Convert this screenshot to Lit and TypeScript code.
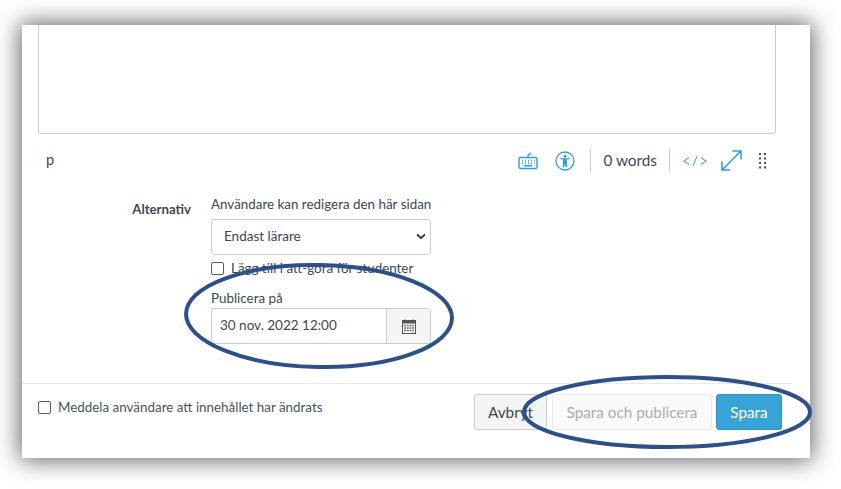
import { LitElement, html, css } from "lit";
import { customElement } from "lit/decorators.js";

@customElement("app-root")
export class AppRoot extends LitElement {
  static styles = css`
    :host { display: block; width: 841px; height: 489px; box-sizing: border-box; padding: 25px 31px 31px 22px; position: relative; overflow: hidden; background: #fff; font-family: Lato, "Liberation Sans", sans-serif; color: #3b4852; }
    .card { height: 433px; background: #fff; box-shadow: 0 0 22px 2px rgba(0,0,0,.62); display: flex; flex-direction: column; }
    .main { padding: 0 34px 0 16px; display: flex; flex-direction: column; }
    .editor { height: 108px; border: 1px solid #c7cdd1; border-top: 0; border-radius: 0 0 3px 3px; }
    .status { height: 53px; display: flex; align-items: center; padding: 0 9px 0 8px; font-size: 14.5px; }
    .tag { flex: 1; color: #3b4852; padding-bottom: 2px; }
    .tools { display: flex; align-items: center; height: 24px; color: #2d9fd6; }
    .tools svg { display: block; }
    .kb { margin-right: 17px; }
    .a11y { margin-right: 15px; }
    .sep { width: 1px; height: 23px; background: #c7cdd1; }
    .words { font-size: 15.3px; margin: 0 12px; padding-bottom: 2px; color: #3b4852; }
    .code { margin: 0 14px 0 13px; color: #5aa3d6; }
    .expand { margin-right: 17px; }
    .form { display: grid; grid-template-columns: 169px 220px; column-gap: 20px; font-size: 13.4px; margin-left: -16px; padding-top: 9px; }
    .label { text-align: right; font-weight: 700; font-size: 13.2px; padding-top: 5px; line-height: 16px; }
    .col { display: flex; flex-direction: column; }
    .cap { line-height: 16px; height: 16px; margin-bottom: 7px; white-space: nowrap; }
    .select { height: 36px; box-sizing: border-box; border: 1px solid #c7cdd1; border-radius: 3px; background: #fff; display: flex; align-items: center; justify-content: space-between; padding: 0 4px 2px 12px; font-size: 13.5px; }
    .check { display: flex; align-items: center; gap: 7px; white-space: nowrap; }
    .box { width: 11px; height: 11px; border: 1px solid #5b5f63; border-radius: 2px; background: #fff; flex: none; }
    .todo { margin-top: 5px; height: 16px; }
    .pub { margin-top: 14px; height: 16px; line-height: 16px; }
    .date { margin-top: 2px; height: 36px; box-sizing: border-box; display: flex; border: 1px solid #c7cdd1; border-radius: 3px; }
    .date .val { flex: 1; padding: 0 8px 2px; display: flex; align-items: center; font-size: 13.5px; }
    .date .cal { width: 43px; background: #f5f5f5; border-left: 1px solid #c7cdd1; display: flex; align-items: center; justify-content: center; }
    .footer { margin-top: 39px; border-top: 1px solid #e8ebed; margin-right: 18px; flex: 1; display: flex; padding: 10px 10px 0 16px; justify-content: space-between; }
    .notify { align-self: flex-start; font-size: 13.4px; margin-top: 5px; height: 16px; color: #48545c; }
    .btns { display: flex; }
    .btn { height: 36px; box-sizing: border-box; border: 1px solid #c7cdd1; border-radius: 3px; background: #f5f5f5; font-size: 15.3px; display: flex; align-items: center; justify-content: center; color: #3b4852; }
    .cancel { width: 73px; margin-right: 5px; }
    .publish { width: 160px; background: #fafafa; border-color: #e6e8ea; color: #a8adb1; margin-right: 4px; }
    .save { width: 66px; background: #38a3d6; border-color: #2e93c4; color: #fff; }
    .ink { position: absolute; left: 0; top: 0; pointer-events: none; }
  `;

  render() {
    return html`
      <div class="card">
        <div class="main">
          <div class="editor"></div>
          <div class="status">
            <span class="tag">p</span>
            <div class="tools">
              <svg class="kb" width="20" height="18" viewBox="0 0 20 18" fill="none" stroke="currentColor" stroke-width="1.4">
                <path d="M10 5 V3.5 Q10 2.5 11.5 2.2 L13 1.5"/>
                <rect x="1" y="5.5" width="18" height="11" rx="1.5"/>
                <path d="M4 8.6h1M7 8.6h1M10 8.6h1M13 8.6h1M16 8.6h.8M4 11h1M7 11h1M10 11h1M13 11h1M16 11h.8M6 13.8h8" stroke-width="1.6"/>
              </svg>
              <svg class="a11y" width="20" height="20" viewBox="0 0 20 20">
                <circle cx="10" cy="10" r="9" fill="none" stroke="currentColor" stroke-width="1.3"/>
                <circle cx="10" cy="5.2" r="1.5" fill="currentColor"/>
                <path d="M4.8 7.5 L8 8.4 V11.6 L7.7 16 H9.4 L10 12.4 L10.6 16 H12.3 L12 11.6 V8.4 L15.2 7.5 L14.9 6.8 L10 7.6 L5.1 6.8 Z" fill="currentColor"/>
              </svg>
              <div class="sep"></div>
              <span class="words">0 words</span>
              <div class="sep"></div>
              <svg class="code" width="24" height="12" viewBox="0 0 24 12" fill="none" stroke="currentColor" stroke-width="1.1">
                <path d="M6 2.5 L1 6 L6 9.5M10 11 L14 1M18 2.5 L23 6 L18 9.5"/>
              </svg>
              <svg class="expand" width="21" height="21" viewBox="0 0 21 21" fill="none" stroke="currentColor" stroke-width="1.5">
                <path d="M1 20 L20 1M11.5 1 H20 V9.5M1 11.5 V20 H9.5"/>
              </svg>
              <svg width="8" height="16" viewBox="0 0 8 16" fill="#444f57">
                <rect x="0" y="0" width="2" height="2"/><rect x="5" y="0" width="2" height="2"/>
                <rect x="0" y="4.5" width="2" height="2"/><rect x="5" y="4.5" width="2" height="2"/>
                <rect x="0" y="9" width="2" height="2"/><rect x="5" y="9" width="2" height="2"/>
                <rect x="0" y="13.5" width="2" height="2"/><rect x="5" y="13.5" width="2" height="2"/>
              </svg>
            </div>
          </div>
          <div class="form">
            <div class="label">Alternativ</div>
            <div class="col">
              <div class="cap">Användare kan redigera den här sidan</div>
              <div class="select">
                <span>Endast lärare</span>
                <svg width="10" height="7" viewBox="0 0 10 7" fill="none" stroke="#333" stroke-width="1.8"><path d="M1 1.5 L5 5 L9 1.5"/></svg>
              </div>
              <div class="check todo"><span class="box"></span><span>Lägg till i att-göra för studenter</span></div>
              <div class="pub">Publicera på</div>
              <div class="date">
                <div class="val">30 nov. 2022 12:00</div>
                <div class="cal">
                  <svg width="14" height="15" viewBox="0 0 14 15">
                    <path d="M3 0.5v2M11 0.5v2" stroke="#555" stroke-width="1.2"/>
                    <rect x="0.5" y="1.5" width="13" height="13" fill="none" stroke="#555"/>
                    <rect x="0.5" y="1.5" width="13" height="3" fill="#555"/>
                    <path d="M2 6.5h10M2 9h10M2 11.5h10" stroke="#777" stroke-width="1.4" stroke-dasharray="2 .7"/>
                  </svg>
                </div>
              </div>
            </div>
          </div>
        </div>
        <div class="footer">
          <div class="check notify"><span class="box"></span><span>Meddela användare att innehållet har ändrats</span></div>
          <div class="btns">
            <div class="btn cancel">Avbryt</div>
            <div class="btn publish">Spara och publicera</div>
            <div class="btn save">Spara</div>
          </div>
        </div>
      </div>
      <svg class="ink" width="841" height="489" fill="none" stroke="#2d5088" stroke-width="4">
        <ellipse cx="319" cy="316" rx="133" ry="51" transform="rotate(1 319 316)"/>
        <ellipse cx="667" cy="412" rx="143" ry="35"/>
      </svg>
    `;
  }
}
